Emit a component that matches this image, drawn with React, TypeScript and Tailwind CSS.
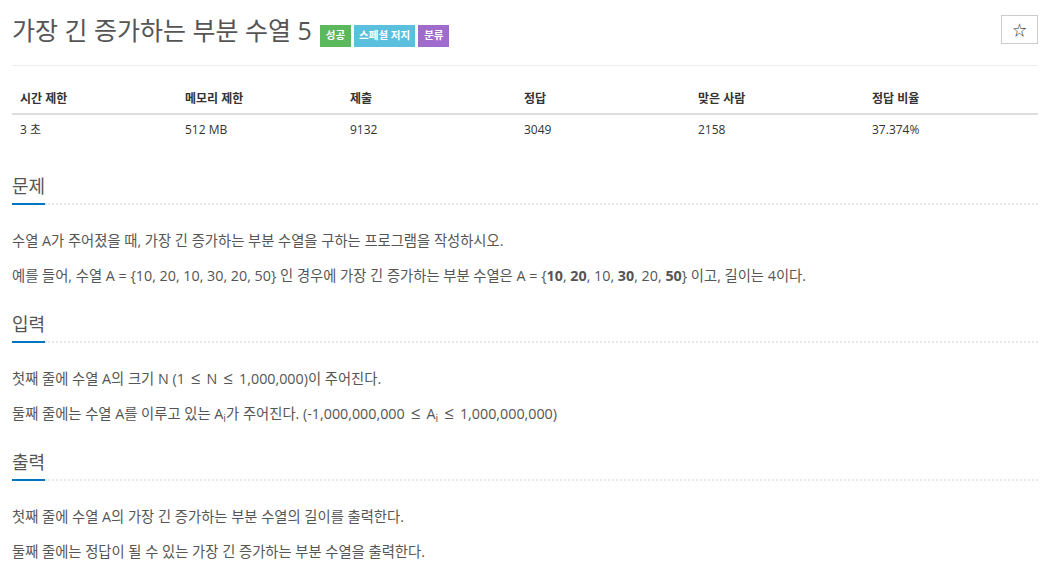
import type { ReactNode } from "react";

const FONT = { fontFamily: "'Open Sans', 'Noto Sans CJK KR', sans-serif" };

const stats = [
  { label: "시간 제한", value: "3 초", w: "w-[165px]" },
  { label: "메모리 제한", value: "512 MB", w: "w-[165px]" },
  { label: "제출", value: "9132", w: "w-[174px]" },
  { label: "정답", value: "3049", w: "w-[174px]" },
  { label: "맞은 사람", value: "2158", w: "w-[174px]" },
  { label: "정답 비율", value: "37.374%", w: "w-[174px]" },
];

function Section({ title, children }: { title: string; children: ReactNode }) {
  return (
    <section>
      <div className="flex items-end">
        <h2 className="pb-[5px] border-b-2 border-[#0076c0] text-[18px] leading-[24px] font-normal text-[#555]">
          {title}
        </h2>
        <div className="flex-1 border-b-2 border-dotted border-[#e8e8e8]" />
      </div>
      <div className="mt-[23px] flex flex-col gap-[10px] text-[14.3px] leading-[25px] text-[#555]">{children}</div>
    </section>
  );
}

const Le = () => <span className="mx-[6px] text-[17px] leading-none">≤</span>;

export default function App() {
  return (
    <div className="w-[1050px] h-[576px] overflow-hidden bg-white px-3" style={FONT}>
      <div className="flex items-start justify-between pt-[15px]">
        <div className="flex items-start">
          <h1 className="text-[25px] leading-[30px] font-normal text-[#555]">가장 긴 증가하는 부분 수열 5</h1>
          <div className="ml-[8px] mt-[10px] flex gap-[3px] text-[10.5px] font-bold text-white">
            <span className="h-[22px] px-[6px] flex items-center bg-[#5cb85c]">성공</span>
            <span className="h-[22px] px-[5px] flex items-center bg-[#5bc0de]">스페셜 저지</span>
            <span className="h-[22px] px-[6px] flex items-center bg-[#9f6bcd]">분류</span>
          </div>
        </div>
        <button className="w-[37px] h-[29px] border border-[#ccc] flex items-center justify-center text-[14px] text-[#333]">
          ☆
        </button>
      </div>

      <div className="mt-[18px] border-t border-[#eee]" />

      <div className="mt-[18px] text-[12px] text-[#333]">
        <div className="flex border-b-2 border-[#ddd]">
          {stats.map((s) => (
            <div key={s.label} className={`${s.w} px-2 h-[29px] flex items-center font-bold`}>
              {s.label}
            </div>
          ))}
        </div>
        <div className="flex">
          {stats.map((s) => (
            <div key={s.label} className={`${s.w} px-2 h-[30px] flex items-center`}>
              {s.value}
            </div>
          ))}
        </div>
      </div>

      <div className="mt-[29px] flex flex-col gap-[24px]">
        <Section title="문제">
          <p>수열 A가 주어졌을 때, 가장 긴 증가하는 부분 수열을 구하는 프로그램을 작성하시오.</p>
          <p>
            예를 들어, 수열 A = {"{"}10, 20, 10, 30, 20, 50{"}"} 인 경우에 가장 긴 증가하는 부분 수열은 A = {"{"}
            <b>10</b>, <b>20</b>, 10, <b>30</b>, 20, <b>50</b>
            {"}"} 이고, 길이는 4이다.
          </p>
        </Section>
        <Section title="입력">
          <p>
            첫째 줄에 수열 A의 크기 N (1<Le />N<Le />1,000,000)이 주어진다.
          </p>
          <p>
            둘째 줄에는 수열 A를 이루고 있는 A<sub>i</sub>가 주어진다. (-1,000,000,000<Le />A<sub>i</sub>
            <Le />
            1,000,000,000)
          </p>
        </Section>
        <Section title="출력">
          <p>첫째 줄에 수열 A의 가장 긴 증가하는 부분 수열의 길이를 출력한다.</p>
          <p>둘째 줄에는 정답이 될 수 있는 가장 긴 증가하는 부분 수열을 출력한다.</p>
        </Section>
      </div>
    </div>
  );
}
